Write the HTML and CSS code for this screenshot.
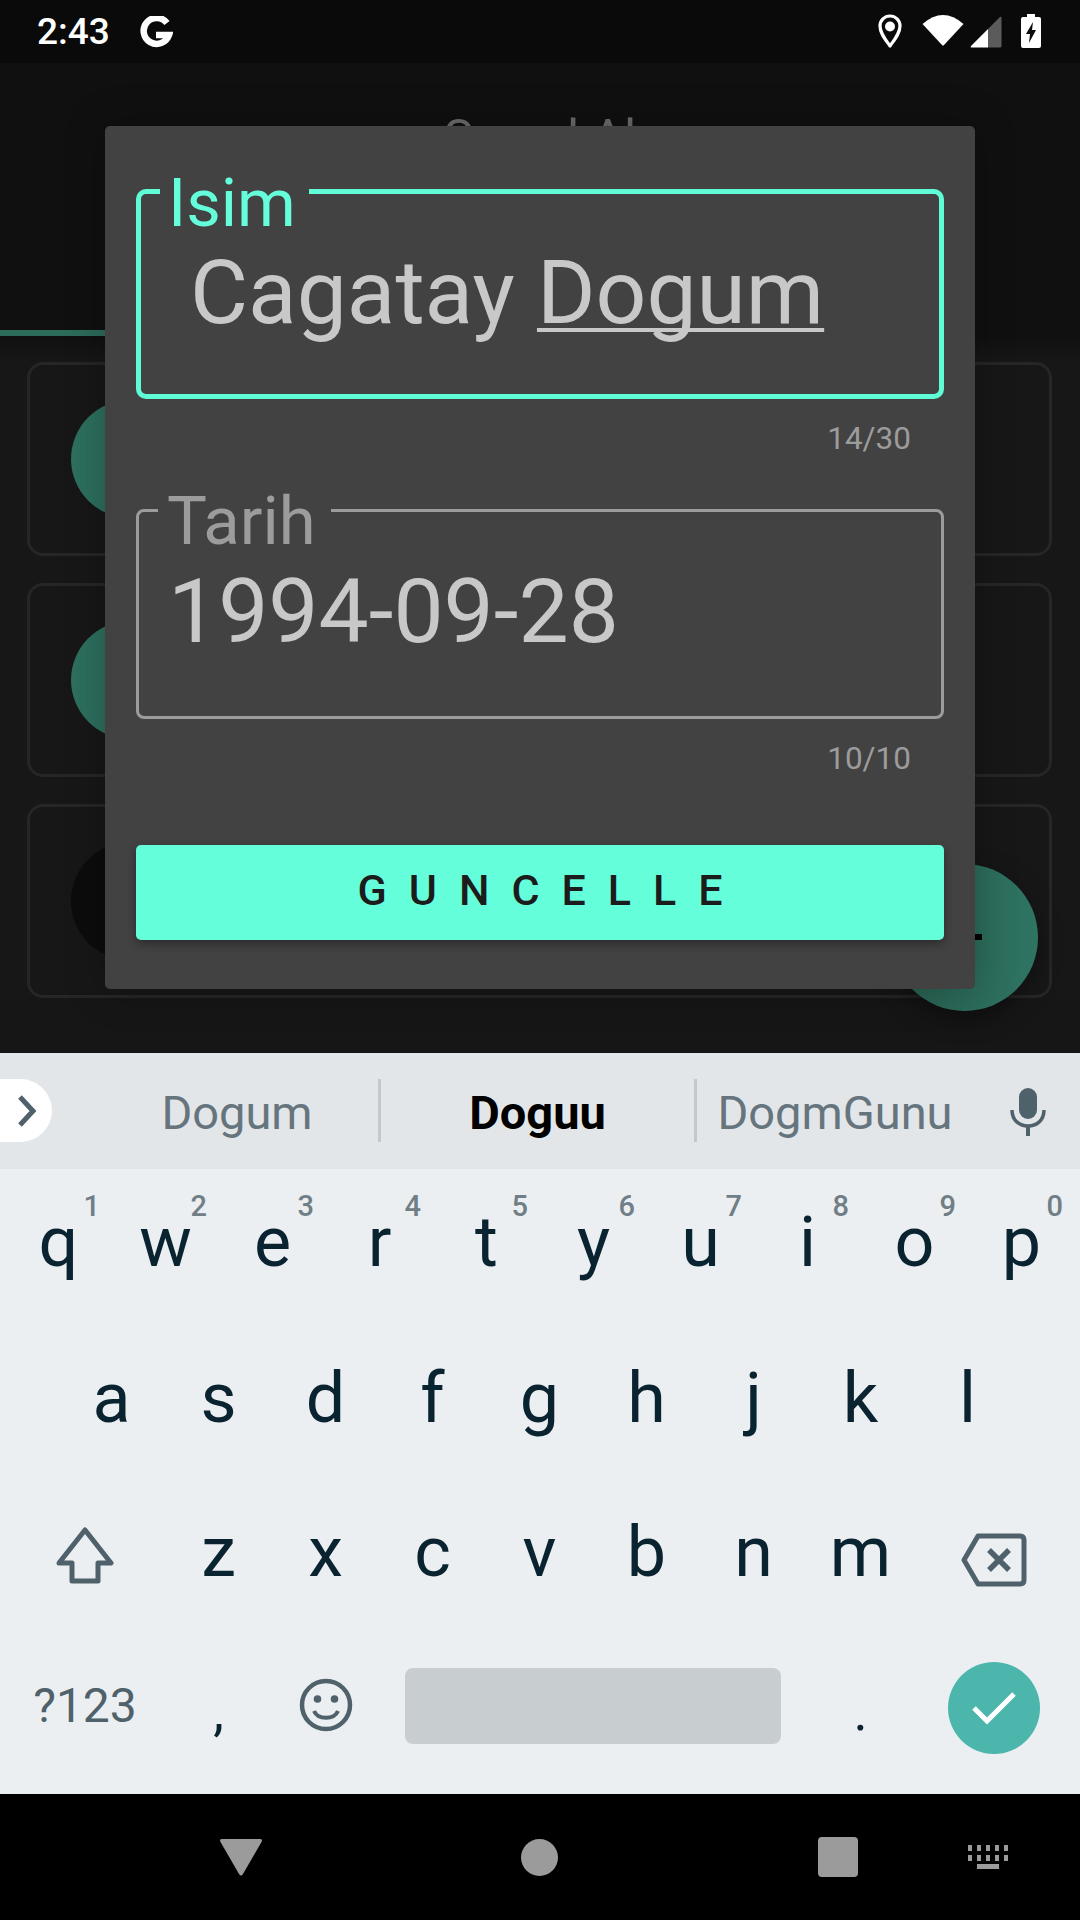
FILE: index.html
```html
<!DOCTYPE html>
<html lang="en">
<head>
    <meta charset="UTF-8">
    <meta name="viewport" content="width=device-width, initial-scale=1.0">
    <title>Guncelle</title>
    <link rel="stylesheet" href="styles.css">
</head>
<body>

    <header class="status-bar">
        <span class="clock">2:43</span>
        <svg class="google-icon" viewBox="0 0 34 32" width="34" height="32">
            <path d="M28 7 A13 13 0 1 0 30 19 H17" fill="none" stroke="#fff" stroke-width="6.5"/>
        </svg>
        <div class="status-icons">
            <svg class="pin-icon" viewBox="0 0 24 34" width="24" height="34">
                <path d="M12 32 C7 25 2 19 2 12 A10 10 0 0 1 22 12 C22 19 17 25 12 32 Z" fill="none" stroke="#fff" stroke-width="3.2" stroke-linejoin="round"/>
                <circle cx="12" cy="12.5" r="5" fill="#fff"/>
            </svg>
            <svg class="wifi-icon" viewBox="0 0 42 32" width="42" height="32">
                <path d="M0.5 10 Q21 -8 41.5 10 L22 31 Q21 32 20 31 Z" fill="#fff"/>
            </svg>
            <svg class="signal-icon" viewBox="0 0 32 32" width="32" height="32">
                <path d="M18 13 L30 1 Q31.500 0 31.500 2 V30 Q31.500 31.500 30 31.500 H18 Z" fill="#5b5b5b"/>
                <path d="M18 13 V31.500 H1.500 Q0 31.500 1 30 Z" fill="#fff"/>
            </svg>
            <svg class="battery-icon" viewBox="0 0 20 34" width="20" height="34">
                <path d="M6 0 H14 V3 H18 Q20 3 20 5 V32 Q20 34 18 34 H2 Q0 34 0 32 V5 Q0 3 2 3 H6 Z" fill="#fff"/>
                <path d="M12 8 L5 20 H9 L8 29 L15 16 H11 Z" fill="#0a0a0a"/>
            </svg>
        </div>
    </header>

    <main class="app">
        <div class="toolbar">
            <h1 class="toolbar-title">Saved Al</h1>
        </div>
        <div class="tab-line"></div>
        <ul class="card-list">
            <li class="card"><span class="avatar"></span></li>
            <li class="card"><span class="avatar"></span></li>
            <li class="card"><span class="avatar avatar-dark"></span></li>
        </ul>
        <div class="fab"><span class="fab-plus"></span></div>

        <div class="dialog">
            <div class="field field-active">
                <label class="field-label label-isim">Isim</label>
                <div class="field-value value-name">Cagatay <span class="composing">Dogum</span></div>
            </div>
            <div class="counter">14/30</div>

            <div class="field">
                <label class="field-label label-tarih">Tarih</label>
                <div class="field-value value-date">1994-09-28</div>
            </div>
            <div class="counter counter-last">10/10</div>

            <button class="update-btn">GUNCELLE</button>
        </div>
    </main>

    <section class="keyboard">
        <div class="suggestions">
            <div class="chevron-pill">
                <svg viewBox="0 0 20 32" width="20" height="32">
                    <path d="M3 2 L16 16 L3 30" fill="none" stroke="#4f616a" stroke-width="5"/>
                </svg>
            </div>
            <span class="suggestion suggestion-left">Dogum</span>
            <span class="suggestion suggestion-main">Doguu</span>
            <span class="suggestion suggestion-right">DogmGunu</span>
            <svg class="mic-icon" viewBox="0 0 36 48" width="36" height="48">
                <rect x="9" y="0" width="18" height="31" rx="9" fill="#4f616a"/>
                <path d="M2 22 C2 33 10 38 18 38 C26 38 34 33 34 22" fill="none" stroke="#4f616a" stroke-width="3.500"/>
                <rect x="16" y="37" width="4" height="11" fill="#4f616a"/>
            </svg>
        </div>

        <div class="kb-row">
            <div class="key">q<span class="hint">1</span></div>
            <div class="key">w<span class="hint">2</span></div>
            <div class="key">e<span class="hint">3</span></div>
            <div class="key">r<span class="hint">4</span></div>
            <div class="key">t<span class="hint">5</span></div>
            <div class="key">y<span class="hint">6</span></div>
            <div class="key">u<span class="hint">7</span></div>
            <div class="key">i<span class="hint">8</span></div>
            <div class="key">o<span class="hint">9</span></div>
            <div class="key">p<span class="hint">0</span></div>
        </div>
        <div class="kb-row row-home">
            <div class="key">a</div>
            <div class="key">s</div>
            <div class="key">d</div>
            <div class="key">f</div>
            <div class="key">g</div>
            <div class="key">h</div>
            <div class="key">j</div>
            <div class="key">k</div>
            <div class="key">l</div>
        </div>
        <div class="kb-row row-shift">
            <div class="key key-wide">
                <svg class="shift-icon" viewBox="0 0 60 58" width="62" height="58">
                    <path d="M30 3 L56 36 H43 V54 H17 V36 H4 Z" fill="none" stroke="#4f616a" stroke-width="5" stroke-linejoin="round"/>
                </svg>
            </div>
            <div class="key">z</div>
            <div class="key">x</div>
            <div class="key">c</div>
            <div class="key">v</div>
            <div class="key">b</div>
            <div class="key">n</div>
            <div class="key">m</div>
            <div class="key key-wide">
                <svg class="back-icon" viewBox="0 0 66 54" width="66" height="54">
                    <path d="M17 3 H59 Q63 3 63 7 V47 Q63 51 59 51 H17 L3 27 Z" fill="none" stroke="#4f616a" stroke-width="5" stroke-linejoin="round"/>
                    <path d="M28 17 L48 37 M48 17 L28 37" stroke="#4f616a" stroke-width="5.500"/>
                </svg>
            </div>
        </div>
        <div class="kb-row">
            <div class="key key-wide key-symbols">?123</div>
            <div class="key key-punct">,</div>
            <div class="key key-emoji">
                <svg class="emoji-icon" viewBox="0 0 54 54" width="54" height="54">
                    <circle cx="27" cy="27" r="24" fill="none" stroke="#4f616a" stroke-width="4.500"/>
                    <circle cx="18.500" cy="21" r="3.800" fill="#4f616a"/>
                    <circle cx="35.500" cy="21" r="3.800" fill="#4f616a"/>
                    <path d="M15 33 C19 42 35 42 39 33" fill="none" stroke="#4f616a" stroke-width="4"/>
                </svg>
            </div>
            <div class="space-wrap"><div class="space-bar"></div></div>
            <div class="key key-punct">.</div>
            <div class="key key-wide key-enter">
                <div class="enter-btn">
                    <svg viewBox="0 0 46 36" width="46" height="36">
                        <path d="M3 18 L16 31 L43 4" fill="none" stroke="#fff" stroke-width="5"/>
                    </svg>
                </div>
            </div>
        </div>
    </section>

    <footer class="nav-bar">
        <svg class="nav-back" viewBox="0 0 44 38" width="44" height="38">
            <path d="M3 1 H41 Q44 1 42.500 4 L24 36 Q22 39 20 36 L1.500 4 Q0 1 3 1 Z" fill="#9b9b9b"/>
        </svg>
        <span class="nav-home"></span>
        <span class="nav-recent"></span>
        <svg class="nav-keyboard" viewBox="0 0 40 24" width="40" height="24">
            <g fill="#9b9b9b">
                <rect x="0" y="0" width="4" height="6"/><rect x="9" y="0" width="4" height="6"/><rect x="18" y="0" width="4" height="6"/><rect x="27" y="0" width="4" height="6"/><rect x="36" y="0" width="4" height="6"/>
                <rect x="0" y="10" width="4" height="6"/><rect x="9" y="10" width="4" height="6"/><rect x="18" y="10" width="4" height="6"/><rect x="27" y="10" width="4" height="6"/><rect x="36" y="10" width="4" height="6"/>
                <rect x="9" y="19" width="22" height="5"/>
            </g>
        </svg>
    </footer>

</body>
</html>
```

FILE: styles.css
```css
* {
    box-sizing: border-box;
}

body {
    font-family: Roboto, "Liberation Sans", sans-serif;
    margin: 0;
    width: 1080px;
    height: 1920px;
    overflow: hidden;
    display: flex;
    flex-direction: column;
    background-color: #000;
}

/* status bar */
.status-bar {
    height: 63px;
    background-color: #0a0a0a;
    display: flex;
    align-items: center;
    padding-left: 37px;
    color: #fff;
}

.clock {
    font-size: 37px;
    font-weight: 500;
    width: 102px;
}

.google-icon {
    margin-top: 1px;
}

.status-icons {
    margin-left: auto;
    display: flex;
    align-items: flex-start;
    padding-right: 39px;
    padding-top: 14px;
    height: 63px;
}

.wifi-icon {
    margin-left: 20px;
}

.signal-icon {
    margin-left: 6px;
    margin-top: 2px;
}

.battery-icon {
    margin-left: 19px;
}

/* dimmed app behind the dialog */
.app {
    position: relative;
    height: 990px;
    background-color: #161616;
}

.toolbar {
    height: 267px;
    background-color: #101010;
    padding-top: 50px;
    text-align: center;
}

.toolbar-title {
    margin: 0;
    font-size: 50px;
    font-weight: 400;
    line-height: 1;
    color: #6c6c6c;
}

.tab-line {
    height: 6px;
    background: linear-gradient(90deg, #2d6b5b 200px, #101010 200px);
}

.card-list {
    list-style: none;
    margin: 0;
    padding: 26px 28px 0 27px;
    display: flex;
    flex-direction: column;
    gap: 27px;
    background: linear-gradient(#101010, #171717 26px);
}

.card {
    height: 194px;
    border: 3px solid #262626;
    border-radius: 16px;
    display: flex;
    align-items: center;
    padding-left: 41px;
}

.avatar {
    width: 118px;
    height: 118px;
    border-radius: 50%;
    background-color: #2d6f5e;
}

.avatar-dark {
    background-color: #0c0c0c;
}

.fab {
    position: absolute;
    left: 891px;
    top: 801px;
    width: 147px;
    height: 147px;
    border-radius: 50%;
    background: linear-gradient(90deg, #27604f, #2f7463);
    box-shadow: 0 8px 24px rgba(0, 0, 0, 0.35);
}

.fab-plus {
    position: absolute;
    left: 60px;
    top: 70px;
    width: 31px;
    height: 6px;
    background-color: #000;
}

.dialog {
    position: absolute;
    left: 105px;
    top: 63px;
    width: 870px;
    height: 863px;
    padding: 63px 31px 0;
    background-color: #424242;
    border-radius: 5px;
    box-shadow: 0 0 40px rgba(0, 0, 0, 0.25);
}

.field {
    position: relative;
    height: 210px;
    border: 3px solid #9c9c9c;
    border-radius: 8px;
}

.field-active {
    border: 5px solid #5ffcd5;
    border-radius: 10px;
}

.field-label {
    position: absolute;
    font-size: 67px;
    line-height: 76px;
    background-color: #424242;
    color: #9c9c9c;
}

.label-isim {
    left: 19px;
    top: -29px;
    width: 149px;
    padding-left: 8px;
    color: #64ffda;
}

.label-tarih {
    left: 19px;
    top: -29px;
    padding: 0 15px 0 9px;
}

.field-value {
    font-size: 89.3px;
    line-height: 90px;
    color: #c8c8c8;
    white-space: nowrap;
}

.value-name {
    padding: 54px 0 0 49px;
}

.value-date {
    padding: 55px 0 0 29px;
}

.composing {
    text-decoration: underline;
    text-decoration-thickness: 4px;
    text-underline-offset: 5px;
    text-decoration-skip-ink: none;
}

.counter {
    height: 110px;
    padding: 22px 33px 0 0;
    text-align: right;
    font-size: 31.5px;
    line-height: 35px;
    color: #9c9c9c;
}

.counter-last {
    height: 126px;
}

.update-btn {
    display: block;
    width: 100%;
    height: 95px;
    border: none;
    border-radius: 5px;
    background-color: #64ffda;
    box-shadow: 0 4px 10px rgba(0, 0, 0, 0.35);
    color: #1c1c1c;
    font-family: inherit;
    font-size: 43px;
    font-weight: 500;
    letter-spacing: 22px;
    padding: 0 0 6px 22px;
}

/* keyboard */
.keyboard {
    height: 741px;
    background-color: #eceff1;
}

.suggestions {
    position: relative;
    height: 116px;
    background-color: #e2e6e9;
    display: flex;
    align-items: flex-start;
}

.chevron-pill {
    width: 52px;
    height: 63px;
    margin-top: 26px;
    background-color: #fff;
    border-radius: 0 32px 32px 0;
    padding: 16px 0 0 17px;
    line-height: 0;
}

.suggestion {
    font-size: 47px;
    line-height: 47px;
    padding-top: 10px;
    color: #66757d;
    text-align: center;
    height: 63px;
    margin-top: 26px;
}

.suggestion-left {
    width: 326px;
    padding-left: 44px;
}

.suggestion-main {
    width: 319px;
    border-left: 3px solid #c3c8cc;
    border-right: 3px solid #c3c8cc;
    font-weight: 700;
    color: #000;
}

.suggestion-right {
    width: 276px;
}

.mic-icon {
    position: absolute;
    left: 1010px;
    top: 35px;
}

.kb-row {
    height: 156px;
    display: flex;
    padding: 0 5px;
}

.row-home {
    padding-left: 58px;
}

.key {
    position: relative;
    width: 107px;
    padding-top: 48px;
    text-align: center;
    font-size: 70px;
    line-height: 50px;
    color: #0a2330;
}

.row-shift .key {
    padding-top: 46px;
}

.key-wide {
    width: 160px;
}

.hint {
    position: absolute;
    top: 27px;
    right: 12px;
    font-size: 29px;
    line-height: 20px;
    font-weight: 500;
    color: #707e86;
}

.shift-icon {
    margin-top: 0;
}

.back-icon {
    margin-top: 6px;
}

.key-symbols {
    padding-top: 46px;
    font-size: 48px;
    line-height: 46px;
    color: #4f616a;
}

.key-punct {
    padding-top: 50px;
    font-size: 54px;
    line-height: 50px;
}

.key-emoji {
    padding-top: 41px;
}

.key-enter {
    padding-top: 25px;
}

.space-wrap {
    width: 428px;
    padding: 31px 26px 0;
}

.space-bar {
    height: 76px;
    background-color: #c8cdd0;
    border-radius: 8px;
}

.enter-btn {
    width: 92px;
    height: 92px;
    margin: 0 auto;
    border-radius: 50%;
    background-color: #4db6ac;
    display: flex;
    align-items: center;
    justify-content: center;
}

/* nav bar */
.nav-bar {
    position: relative;
    height: 126px;
    background-color: #000;
    display: flex;
    align-items: center;
    padding-left: 219px;
}

.nav-home {
    width: 37px;
    height: 37px;
    border-radius: 50%;
    margin-left: 258px;
    background-color: #9b9b9b;
}

.nav-recent {
    width: 40px;
    height: 40px;
    border-radius: 4px;
    margin-left: 260px;
    background-color: #9b9b9b;
}

.nav-keyboard {
    margin-left: 110px;
}
```
